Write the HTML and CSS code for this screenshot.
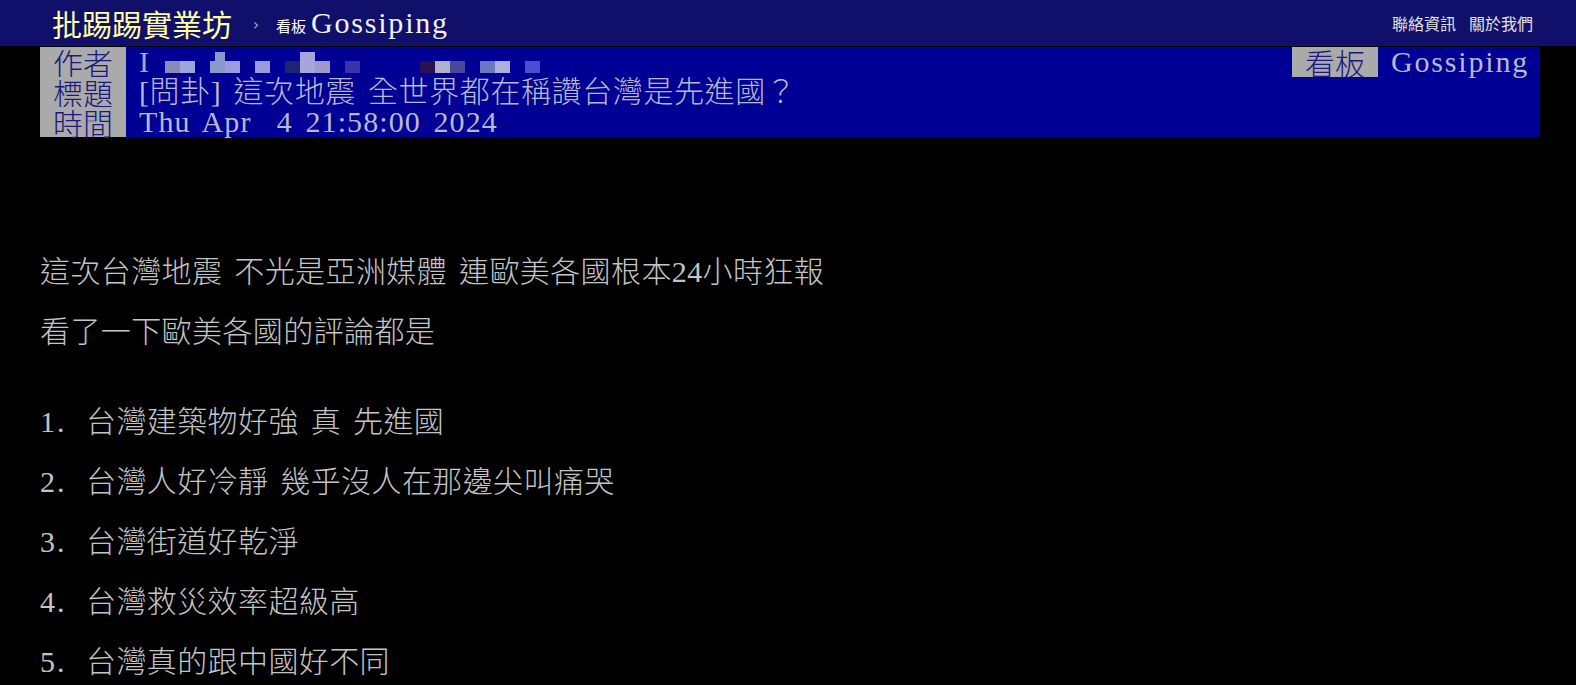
FILE: index.html
```html
<!DOCTYPE html>
<html lang="zh-Hant">
<head>
<meta charset="utf-8">
<title>[問卦] 這次地震 全世界都在稱讚台灣是先進國？ - 看板 Gossiping - 批踢踢實業坊</title>
<link rel="stylesheet" href="styles.css">
</head>
<body>
<div class="topbar">
  <span class="site-title">批踢踢實業坊</span>
  <span class="sep">›</span>
  <span class="board-label">看板</span>
  <span class="board-name">Gossiping</span>
  <nav class="nav">
    <span>聯絡資訊</span>
    <span>關於我們</span>
  </nav>
</div>

<div class="meta">
  <div class="meta-row">
    <span class="tag">作者</span>
    <span class="value author"><span class="author-i">I</span><svg class="mosaic" width="400" height="30" viewBox="0 0 400 30" aria-hidden="true">
      <rect x="15" y="14" width="15" height="12" fill="#8a8ab8"/>
      <rect x="30" y="14" width="15" height="12" fill="#9aa6dc"/>
      <rect x="60" y="14" width="15" height="12" fill="#8899cc"/>
      <rect x="65" y="5" width="10" height="9" fill="#8899cc"/>
      <rect x="75" y="14" width="15" height="12" fill="#9b9be0"/>
      <rect x="105" y="14" width="15" height="12" fill="#9a9ade"/>
      <rect x="135" y="14" width="15" height="12" fill="#1c2670"/>
      <rect x="150" y="5" width="15" height="21" fill="#a6a6dc"/>
      <rect x="165" y="14" width="15" height="12" fill="#9e98cc"/>
      <rect x="195" y="14" width="15" height="12" fill="#3a32a8"/>
      <rect x="270" y="14" width="15" height="12" fill="#2a1250"/>
      <rect x="285" y="14" width="15" height="12" fill="#b0b0d0"/>
      <rect x="300" y="14" width="15" height="12" fill="#4a4898"/>
      <rect x="330" y="14" width="15" height="12" fill="#6a78c0"/>
      <rect x="345" y="14" width="15" height="12" fill="#aeaee0"/>
      <rect x="375" y="14" width="15" height="12" fill="#4a4ed0"/>
    </svg></span>
    <span class="tag">看板</span>
    <span class="value board-value">Gossiping</span>
  </div>
  <div class="meta-row">
    <span class="tag">標題</span>
    <span class="value title-value">[問卦] 這次地震 全世界都在稱讚台灣是先進國？</span>
  </div>
  <div class="meta-row">
    <span class="tag">時間</span>
    <span class="value date-value">Thu Apr  4 21:58:00 2024</span>
  </div>
</div>

<div class="content">
  <div class="line">這次台灣地震 不光是亞洲媒體 連歐美各國根本24小時狂報</div>
  <div class="line">看了一下歐美各國的評論都是</div>
  <div class="blank"></div>
  <div class="line"><span class="num">1. </span>台灣建築物好強 真 先進國</div>
  <div class="line"><span class="num">2. </span>台灣人好冷靜 幾乎沒人在那邊尖叫痛哭</div>
  <div class="line"><span class="num">3. </span>台灣街道好乾淨</div>
  <div class="line"><span class="num">4. </span>台灣救災效率超級高</div>
  <div class="line"><span class="num">5. </span>台灣真的跟中國好不同</div>
</div>
</body>
</html>
```

FILE: styles.css
```css
html, body {
  margin: 0;
  padding: 0;
  background: #000;
  height: 100%;
  overflow: hidden;
}

body {
  font-family: "Liberation Serif", "Noto Sans CJK TC", serif;
  word-spacing: 0.25em;
  color: #bbbbbb;
}

/* ---------- top bar ---------- */
.topbar {
  display: flex;
  align-items: center;
  height: 46px;
  box-sizing: border-box;
  padding: 0 43px 0 52px;
  background: #10106a;
}

.site-title {
  font-family: "Noto Sans CJK TC", sans-serif;
  font-size: 30px;
  line-height: 1;
  color: #ffffa0;
}

.sep {
  font-family: "DejaVu Sans", sans-serif;
  font-size: 15px;
  color: #b0b0c8;
  margin-left: 21px;
  position: relative;
  top: 2px;
}

.board-label {
  font-family: "Noto Sans CJK TC", sans-serif;
  font-size: 15px;
  color: #ffffff;
  margin-left: 17px;
  position: relative;
  top: 2px;
}

.board-name {
  font-size: 30px;
  line-height: 1;
  color: #f0f0f0;
  margin-left: 5px;
  letter-spacing: 1.8px;
}

.nav {
  margin-left: auto;
  display: flex;
  gap: 13px;
  font-family: "Noto Sans CJK TC", sans-serif;
  font-size: 16px;
  color: #e0e0e0;
}

/* ---------- meta ---------- */
.meta {
  margin: 1px 36px 0 40px;
  background: #000094;
}

.meta-row {
  display: flex;
  height: 30px;
  font-size: 30px;
  line-height: 30px;
}

.tag {
  flex: none;
  width: 86px;
  text-align: center;
  background: #aaaaaa;
  color: #1a1a7e;
  font-family: "Noto Sans CJK TC", sans-serif;
  font-weight: 300;
}

.value {
  padding: 0 13px;
  color: #b8b8cc;
  white-space: pre;
  font-weight: 300;
}

.title-value {
  letter-spacing: 0.6px;
}

.date-value {
  letter-spacing: 1.1px;
}

.author {
  flex: 1;
  display: flex;
  align-items: flex-start;
}

.author-i {
  color: #a8a8c8;
}

.mosaic {
  display: block;
  margin-left: 1px;
}

.board-value {
  letter-spacing: 1.8px;
  padding-right: 11px;
}

/* ---------- content ---------- */
.content {
  padding: 105px 0 0 40px;
  font-size: 30px;
  font-weight: 300;
  color: #c4c4c4;
}

.line {
  height: 60px;
  line-height: 60px;
  white-space: pre;
  letter-spacing: 0.4px;
}

.num {
  display: inline-block;
  width: 46px;
  letter-spacing: 2px;
}

.blank {
  height: 30px;
}
```
